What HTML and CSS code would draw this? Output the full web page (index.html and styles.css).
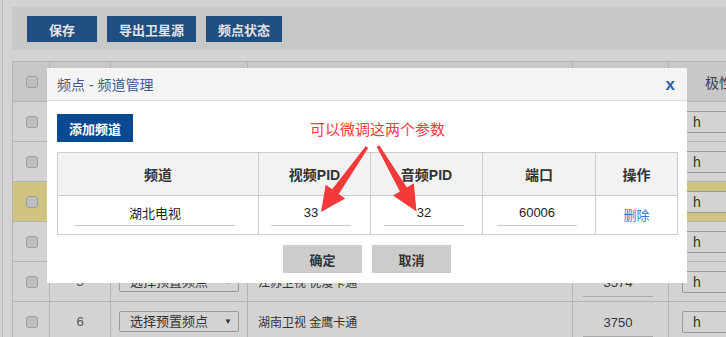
FILE: index.html
```html
<!DOCTYPE html>
<html lang="zh-CN">
<head>
<meta charset="utf-8">
<title>频点 - 频道管理</title>
<link rel="stylesheet" href="styles.css">
</head>
<body>
<div class="page">
  <div class="toolbar">
    <button class="tbtn w70">保存</button>
    <button class="tbtn w89">导出卫星源</button>
    <button class="tbtn w76">频点状态</button>
  </div>
  <div class="grid">
    <div class="row head">
      <div class="c c1"><span class="cb"></span></div>
      <div class="c c2"></div>
      <div class="c c3"></div>
      <div class="c c4"></div>
      <div class="c c5"></div>
      <div class="c c6"><span class="htext">极性</span></div>
    </div>
    <div class="row">
      <div class="c c1"><span class="cb"></span></div>
      <div class="c c2"></div>
      <div class="c c3"></div>
      <div class="c c4"></div>
      <div class="c c5"></div>
      <div class="c c6"><span class="hsel">h</span></div>
    </div>
    <div class="row">
      <div class="c c1"><span class="cb"></span></div>
      <div class="c c2"></div>
      <div class="c c3"></div>
      <div class="c c4"></div>
      <div class="c c5"></div>
      <div class="c c6"><span class="hsel">h</span></div>
    </div>
    <div class="row hl">
      <div class="c c1"><span class="cb"></span></div>
      <div class="c c2"></div>
      <div class="c c3"></div>
      <div class="c c4"></div>
      <div class="c c5"></div>
      <div class="c c6"><span class="hsel">h</span></div>
    </div>
    <div class="row">
      <div class="c c1"><span class="cb"></span></div>
      <div class="c c2"></div>
      <div class="c c3"></div>
      <div class="c c4"></div>
      <div class="c c5"></div>
      <div class="c c6"><span class="hsel">h</span></div>
    </div>
    <div class="row">
      <div class="c c1"><span class="cb"></span></div>
      <div class="c c2">5</div>
      <div class="c c3"><span class="psel">选择预置频点<span class="caret">▼</span></span></div>
      <div class="c c4">江苏卫视 优漫卡通</div>
      <div class="c c5"><span class="uline">3574</span></div>
      <div class="c c6"><span class="hsel">h</span></div>
    </div>
    <div class="row">
      <div class="c c1"><span class="cb"></span></div>
      <div class="c c2">6</div>
      <div class="c c3"><span class="psel">选择预置频点<span class="caret">▼</span></span></div>
      <div class="c c4">湖南卫视 金鹰卡通</div>
      <div class="c c5"><span class="uline">3750</span></div>
      <div class="c c6"><span class="hsel">h</span></div>
    </div>
  </div>
</div>

<div class="modal">
  <div class="mhead">
    <span class="mtitle">频点 - 频道管理</span>
    <span class="mclose">x</span>
  </div>
  <div class="mbody">
    <button class="addbtn">添加频道</button>
    <div class="ctable">
      <div class="crow chead">
        <div class="cc">频道</div>
        <div class="cc">视频PID</div>
        <div class="cc">音频PID</div>
        <div class="cc">端口</div>
        <div class="cc">操作</div>
      </div>
      <div class="crow cbody">
        <div class="cc"><input class="inp i1" value="湖北电视"></div>
        <div class="cc"><input class="inp i2" value="33"></div>
        <div class="cc"><input class="inp i3" value="32"></div>
        <div class="cc"><input class="inp i4" value="60006"></div>
        <div class="cc center"><a class="del">删除</a></div>
      </div>
    </div>
    <div class="mfoot">
      <button class="gbtn">确定</button>
      <button class="gbtn">取消</button>
    </div>
  </div>
  <div class="note">可以微调这两个参数</div>
</div>

<svg class="arrows" width="726" height="337" viewBox="0 0 726 337">
  <polygon fill="#f23a3a" points="365.8,146.1 332.2,189.3 325.7,184.7 321,212 345.2,198.5 338.8,193.9 368.2,147.9"/>
  <polygon fill="#f23a3a" points="376.7,146.8 399.9,191.4 393.0,195.5 416.5,211.5 413.8,183.3 406.9,187.4 379.3,145.2"/>
</svg>
</body>
</html>
```

FILE: styles.css
```css
* { box-sizing: border-box; }
html, body { margin: 0; padding: 0; overflow: hidden; }
body {
  width: 726px;
  height: 337px;
  background: #d3d3d3;
  font-family: "Liberation Sans", "Noto Sans CJK SC", sans-serif;
  font-size: 13px;
  color: #333;
  position: relative;
}
.page {
  margin-left: 2px;
  border-left: 1px solid #bcbcbc;
  padding: 7px 0 0 9px;
  height: 337px;
  overflow: hidden;
}
.toolbar {
  height: 43px;
  background: #c8c8c8;
  display: flex;
  gap: 10px;
  padding: 9px 0 0 15px;
}
.tbtn {
  height: 26px;
  border: 0;
  padding: 0;
  background: #1f4e80;
  color: #e2e2e2;
  font: bold 13px "Liberation Sans", "Noto Sans CJK SC", sans-serif;
}
.w70 { width: 70px; }
.w89 { width: 89px; }
.w76 { width: 76px; }

.grid {
  margin-top: 11px;
  width: 800px;
  border-top: 1px solid #b3b3b3;
  border-left: 1px solid #b3b3b3;
}
.row {
  display: grid;
  grid-template-columns: 37px 61px 137px 325px 96px 140px;
  height: 40px;
  border-bottom: 1px solid #b3b3b3;
}
.row.head { background: #c8c8c8; }
.row.hl { background: #cec37f; }
.c {
  border-right: 1px solid #b3b3b3;
  display: flex;
  align-items: center;
  min-width: 0;
  white-space: nowrap;
}
.cb {
  width: 12px;
  height: 12px;
  margin-left: 13px;
  border: 1px solid #9d9d9d;
  border-radius: 3px;
  background: #bfbfbf;
}
.c2 { justify-content: center; color: #555; font-size: 13px; }
.c4 { padding-left: 10px; font-size: 12px; color: #333; }
.c5 { padding-left: 10px; }
.htext { margin-left: 36px; font-size: 14px; color: #3e3e3e; }
.hsel {
  margin-left: 13px;
  width: 80px;
  height: 22px;
  border: 1px solid #9a9a9a;
  border-radius: 2px;
  background: #d3d3d3;
  padding-left: 10px;
  font-size: 14px;
  line-height: 20px;
  color: #333;
}
.psel {
  margin-left: 8px;
  width: 120px;
  height: 21px;
  border: 1px solid #9a9a9a;
  border-radius: 2px;
  padding-left: 10px;
  font-size: 13px;
  line-height: 19px;
  color: #333;
  display: flex;
  align-items: center;
}
.caret { margin-left: auto; margin-right: 6px; font-size: 8px; color: #333; }
.uline {
  width: 70px;
  height: 28px;
  border-bottom: 1px solid #a9a9a9;
  text-align: center;
  line-height: 28px;
  font-size: 13px;
  color: #333;
  margin-top: 2px;
}

.modal {
  position: absolute;
  left: 47px;
  top: 68px;
  width: 640px;
  height: 215px;
  background: #fff;
}
.mhead {
  height: 33px;
  background: #f4f4f4;
  border-bottom: 1px solid #dcdcdc;
  display: flex;
  align-items: center;
  padding: 0 12px 0 10px;
}
.mtitle { font-size: 14px; color: #3b5b8d; }
.mclose {
  margin-left: auto;
  font: bold 17px "Liberation Sans", sans-serif;
  color: #2c62a2;
  margin-top: 1px;
}
.mbody { padding: 13px 10px 0 10px; }
.addbtn {
  display: block;
  width: 76px;
  height: 28px;
  border: 0;
  padding: 0;
  background: #09498f;
  color: #fff;
  font: bold 13px "Liberation Sans", "Noto Sans CJK SC", sans-serif;
}
.ctable {
  margin-top: 10px;
  width: 621px;
  border-top: 1px solid #cccccc;
  border-left: 1px solid #cccccc;
}
.crow {
  display: grid;
  grid-template-columns: 201px 112px 112px 113px 82px;
}
.chead { height: 43px; background: #f2f2f2; }
.cbody { height: 39px; }
.cc {
  border-right: 1px solid #cccccc;
  border-bottom: 1px solid #cccccc;
  min-width: 0;
}
.chead .cc {
  display: flex;
  align-items: center;
  justify-content: center;
  font-size: 14px;
  font-weight: bold;
  color: #333;
}
.inp {
  display: block;
  height: 26px;
  margin-top: 4px;
  border: 0;
  border-bottom: 1px solid #c8c8c8;
  background: transparent;
  text-align: center;
  font: 13px "Liberation Sans", "Noto Sans CJK SC", sans-serif;
  color: #222;
  padding: 0;
  outline: none;
}
.i1 { width: 160px; margin-left: 17px; }
.i2 { width: 80px; margin-left: 12px; }
.i3 { width: 80px; margin-left: 13px; }
.i4 { width: 80px; margin-left: 14px; }
.center { display: flex; align-items: center; justify-content: center; }
.del { color: #2f7bd3; font-size: 13px; padding-bottom: 1px; }
.mfoot {
  margin-top: 10px;
  display: flex;
  justify-content: center;
  gap: 10px;
}
.gbtn {
  width: 79px;
  height: 28px;
  border: 0;
  padding: 0;
  background: #cccccc;
  color: #333;
  font: bold 13px "Liberation Sans", "Noto Sans CJK SC", sans-serif;
}
.note {
  position: absolute;
  left: 263px;
  top: 50px;
  font-size: 15px;
  color: #f43c3c;
  white-space: nowrap;
}
.arrows {
  position: absolute;
  left: 0;
  top: 0;
  pointer-events: none;
}
```
